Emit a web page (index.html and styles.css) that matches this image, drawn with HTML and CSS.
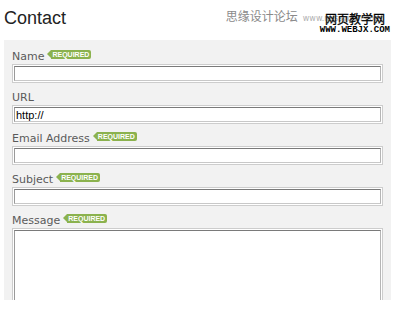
FILE: index.html
```html
<!DOCTYPE html>
<html>
<head>
<meta charset="utf-8">
<link rel="stylesheet" href="styles.css">
</head>
<body>
<div class="header">
  <h1 class="title">Contact</h1>
  <div class="brand">
    <div class="brand-top">
      <span class="brand-cn">思缘设计论坛</span>
      <span class="brand-url">www.missyuan.com<span class="brand-black">网页教学网</span></span>
    </div>
    <div class="brand-bottom">WWW.WEBJX.COM</div>
  </div>
</div>
<form class="panel">
  <div class="field">
    <div class="label"><span>Name</span><span class="req">REQUIRED</span></div>
    <input class="text" type="text">
  </div>
  <div class="field">
    <div class="label"><span>URL</span></div>
    <input class="text" type="text" value="http://">
  </div>
  <div class="field">
    <div class="label"><span>Email Address</span><span class="req">REQUIRED</span></div>
    <input class="text" type="text">
  </div>
  <div class="field">
    <div class="label"><span>Subject</span><span class="req">REQUIRED</span></div>
    <input class="text" type="text">
  </div>
  <div class="field">
    <div class="label"><span>Message</span><span class="req">REQUIRED</span></div>
    <textarea class="text area"></textarea>
  </div>
</form>
</body>
</html>
```
FILE: styles.css
```css
html, body {
  margin: 0;
  padding: 0;
  background: #fff;
}
body {
  width: 395px;
  height: 318px;
  overflow: hidden;
  font-family: "DejaVu Sans", Verdana, sans-serif;
}
.header {
  display: flex;
  height: 40px;
}
.title {
  margin: 0;
  padding: 7px 0 0 4px;
  font-family: "Liberation Sans", Arial, sans-serif;
  font-weight: normal;
  font-size: 18px;
  line-height: 22px;
  color: #222;
}
.brand {
  margin-left: auto;
  padding: 8px 5px 0 0;
  display: flex;
  flex-direction: column;
  align-items: flex-end;
}
.brand-top {
  display: flex;
  align-items: baseline;
}
.brand-cn {
  font-family: "Noto Sans CJK SC", sans-serif;
  font-size: 12px;
  line-height: 15px;
  color: #8a8a8a;
}
.brand-url {
  position: relative;
  margin-left: 5px;
  font-family: "DejaVu Sans", sans-serif;
  font-size: 8px;
  color: #b0b0b0;
  padding-right: 8px;
}
.brand-black {
  position: absolute;
  right: 5px;
  bottom: -3px;
  font-family: "Noto Sans CJK SC", sans-serif;
  font-weight: normal;
  font-size: 12px;
  line-height: 15px;
  color: #000;
  -webkit-text-stroke: 0.3px #000;
}
.brand-bottom {
  margin-top: 3px;
  font-family: "Liberation Mono", monospace;
  font-weight: bold;
  font-size: 9px;
  line-height: 9px;
  color: #000;
}
.panel {
  margin: 0 4px;
  height: 260px;
  overflow: hidden;
  background: #f2f2f2;
  padding: 10px 8px 0 8px;
  box-sizing: border-box;
  display: flex;
  flex-direction: column;
}
.field {
  display: flex;
  flex-direction: column;
  margin-bottom: 10px;
}
.label {
  display: flex;
  align-items: flex-start;
  gap: 7px;
  font-size: 11px;
  line-height: 13px;
  color: #5a5a5a;
}
.req {
  position: relative;
  margin-top: 0;
  height: 9px;
  padding: 0 2px 0 1px;
  background: #8bb24e;
  border-radius: 0 2px 2px 0;
  color: #fff;
  font-family: "Liberation Sans", Arial, sans-serif;
  font-weight: bold;
  font-size: 7px;
  line-height: 9px;
}
.req::before {
  content: "";
  position: absolute;
  left: -4px;
  top: 0;
  border-style: solid;
  border-width: 4.5px 4px 4.5px 0;
  border-color: transparent #8bb24e transparent transparent;
}
.text {
  margin: 3px 2px 0 2px;
  height: 15px;
  padding: 0 1px;
  box-sizing: border-box;
  width: calc(100% - 4px);
  border: 1px solid;
  border-color: #7a7a7a #b5b5b5 #c8c8c8 #9a9a9a;
  box-shadow: 0 0 0 1px #fff, 0 0 0 2px #cdcdcd;
  background: #fff;
  font-family: "Liberation Sans", Arial, sans-serif;
  font-size: 11px;
  line-height: 13px;
  color: #000;
  outline: none;
}
.area {
  height: 120px;
  resize: none;
}
```
